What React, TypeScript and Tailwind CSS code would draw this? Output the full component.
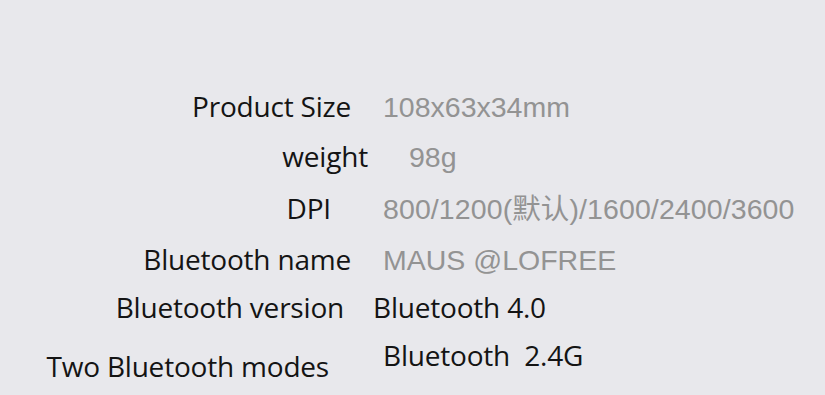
import React from "react";

const label =
  "block text-right text-[28px] leading-none tracking-[-0.2px] text-[#141414] whitespace-pre font-[family-name:'Open_Sans','Noto_Sans',sans-serif]";
const dark =
  "block text-[28px] leading-none tracking-[-0.2px] text-[#141414] whitespace-pre font-[family-name:'Open_Sans','Noto_Sans',sans-serif]";
const value =
  "block text-[28.5px] leading-none text-[#939393] whitespace-pre font-[family-name:'Liberation_Sans','Noto_Sans_CJK_SC',sans-serif]";

export default function App() {
  return (
    <div className="w-[825px] h-[395px] bg-[#e8e8ec] flex flex-col pt-[92px] overflow-hidden">
      <div className="flex items-baseline h-[50px]">
        <span className={`${label} w-[351px]`}>Product Size</span>
        <span className={`${value} ml-[32px]`}>108x63x34mm</span>
      </div>
      <div className="flex items-baseline h-[52px]">
        <span className={`${label} w-[368px]`}>weight</span>
        <span className={`${value} ml-[41px]`}>98g</span>
      </div>
      <div className="flex items-baseline h-[51px]">
        <span className={`${label} w-[331px]`}>DPI</span>
        <span className={`${value} ml-[52px] tracking-[0.1px]`}>800/1200(默认)/1600/2400/3600</span>
      </div>
      <div className="flex items-baseline h-[48px]">
        <span className={`${label} w-[351px]`}>Bluetooth name</span>
        <span className={`${value} ml-[32px]`}>MAUS @LOFREE</span>
      </div>
      <div className="flex items-baseline h-[49px]">
        <span className={`${label} w-[344px]`}>Bluetooth version</span>
        <span className={`${dark} ml-[29px]`}>Bluetooth 4.0</span>
      </div>
      <div className="flex items-start">
        <span className={`${label} w-[329px] mt-[10px]`}>Two Bluetooth modes</span>
        <span className={`${dark} ml-[54px] mt-[-1px]`}>Bluetooth  2.4G</span>
      </div>
    </div>
  );
}
